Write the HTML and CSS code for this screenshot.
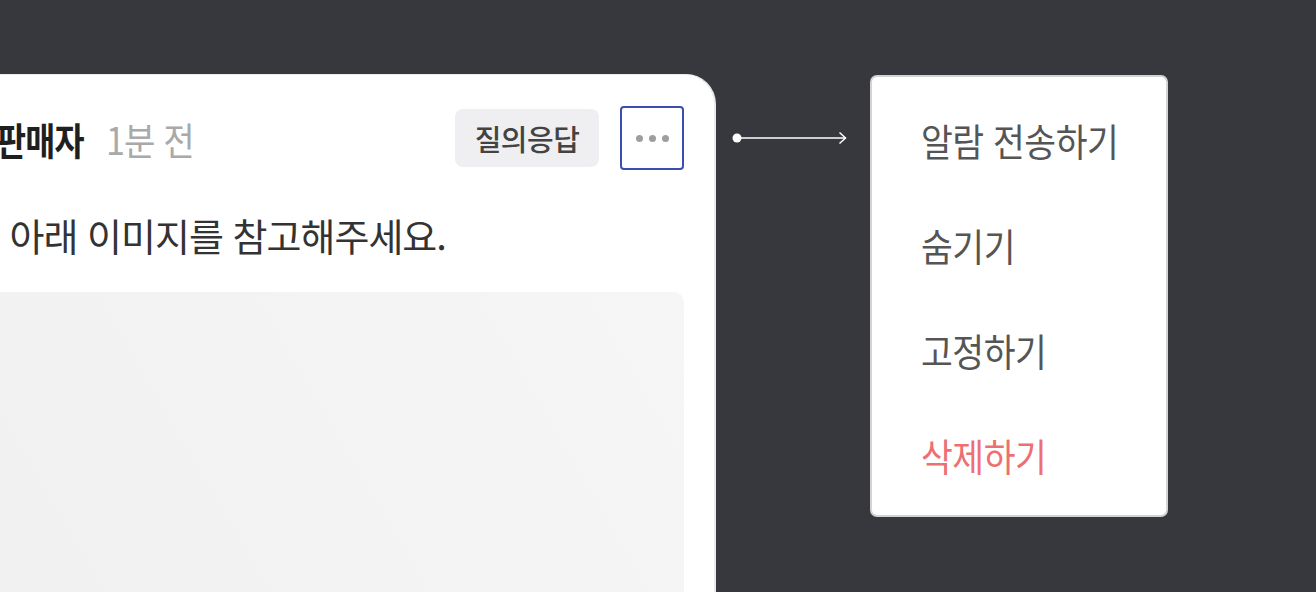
FILE: index.html
```html
<!DOCTYPE html>
<html lang="ko">
<head>
<meta charset="utf-8">
<link rel="stylesheet" href="styles.css">
</head>
<body>
<div class="stage">
  <div class="card">
    <div class="card-head">
      <div class="author">
        <span class="name">판매자</span>
        <span class="time">1분 전</span>
      </div>
      <div class="actions">
        <span class="tag">질의응답</span>
        <button class="more" aria-label="더보기">
          <span class="dot"></span><span class="dot"></span><span class="dot"></span>
        </button>
      </div>
    </div>
    <p class="body-text"><span class="body-inner">내용은 아래 이미지를 참고해주세요.</span></p>
    <div class="image"></div>
  </div>
  <svg class="connector" width="116" height="14" viewBox="0 0 116 14">
    <circle cx="5" cy="7" r="4.5" fill="#fff"/>
    <line x1="5" y1="7" x2="114" y2="7" stroke="#fff" stroke-width="1.5"/>
    <path d="M107.5 1.5 L113.5 7 L107.5 12.5" fill="none" stroke="#fff" stroke-width="1.5"/>
  </svg>
  <ul class="menu">
    <li class="menu-item"><span class="menu-label">알람 전송하기</span></li>
    <li class="menu-item"><span class="menu-label">숨기기</span></li>
    <li class="menu-item"><span class="menu-label">고정하기</span></li>
    <li class="menu-item danger"><span class="menu-label">삭제하기</span></li>
  </ul>
</div>
</body>
</html>
```

FILE: styles.css
```css
html, body {
  margin: 0;
  padding: 0;
  background: #36383d;
  height: 592px;
  overflow: hidden;
}

body {
  font-family: "Noto Sans CJK KR", "Noto Sans", sans-serif;
}

.stage {
  display: flex;
  align-items: flex-start;
  padding-top: 74px;
}

.card {
  margin-left: -40px;
  width: 756px;
  height: 560px;
  box-sizing: border-box;
  background: #fff;
  border-right: 2px solid #e9e9ea;
  border-top: 1px solid #ececec;
  border-top-right-radius: 30px;
  padding: 31px 30px 0 32px;
  flex-shrink: 0;
}

.card-head {
  display: flex;
  align-items: center;
  justify-content: space-between;
  height: 64px;
}

.author {
  display: flex;
  align-items: center;
  width: 260px;
  height: 64px;
}

.name {
  display: inline-block;
  font-size: 38px;
  font-weight: 700;
  color: #1f1f1f;
  letter-spacing: -1px;
  transform: scaleX(0.86);
  transform-origin: left center;
  margin-left: 4px;
}

.time {
  display: inline-block;
  font-size: 38px;
  color: #a9a9a9;
  letter-spacing: -1px;
  transform: scaleX(0.9);
  transform-origin: left center;
  margin-left: 8px;
}

.actions {
  display: flex;
  align-items: center;
  gap: 21px;
}

.tag {
  display: flex;
  align-items: center;
  justify-content: center;
  width: 144px;
  height: 58px;
  border-radius: 8px;
  background: #efeff1;
  color: #434343;
  font-size: 29px;
  font-weight: 500;
  letter-spacing: -0.5px;
}

.more {
  display: flex;
  align-items: center;
  justify-content: center;
  gap: 6px;
  width: 64px;
  height: 64px;
  box-sizing: border-box;
  border: 2px solid #3b4fae;
  border-radius: 4px;
  background: #fff;
  padding: 0;
}

.dot {
  width: 7px;
  height: 7px;
  border-radius: 50%;
  background: #9e9e9e;
}

.body-text {
  margin: 41px 0 0 0;
  height: 48px;
  line-height: 48px;
  white-space: nowrap;
}

.body-inner {
  display: inline-block;
  margin-left: -94px;
  font-size: 38px;
  color: #333;
  letter-spacing: -1px;
}

.image {
  margin-top: 33px;
  height: 320px;
  border-radius: 10px;
  background: linear-gradient(60deg, #f1f1f1 0%, #f3f3f3 50%, #f6f6f6 100%);
}

.connector {
  margin: 57px 0 0 16px;
  flex-shrink: 0;
}

.menu {
  list-style: none;
  margin: 1px 0 0 22px;
  padding: 10px 0 8px;
  width: 298px;
  box-sizing: border-box;
  background: #fff;
  border: 2px solid #d3d3d5;
  border-radius: 7px;
  flex-shrink: 0;
}

.menu-item {
  height: 105px;
  display: flex;
  align-items: center;
  padding-left: 49px;
}

.menu-label {
  display: inline-block;
  font-size: 38px;
  color: #555;
  letter-spacing: -0.5px;
  transform: scaleX(0.91);
  transform-origin: left center;
}

.menu-item.danger .menu-label {
  color: #ee6f72;
}
```
